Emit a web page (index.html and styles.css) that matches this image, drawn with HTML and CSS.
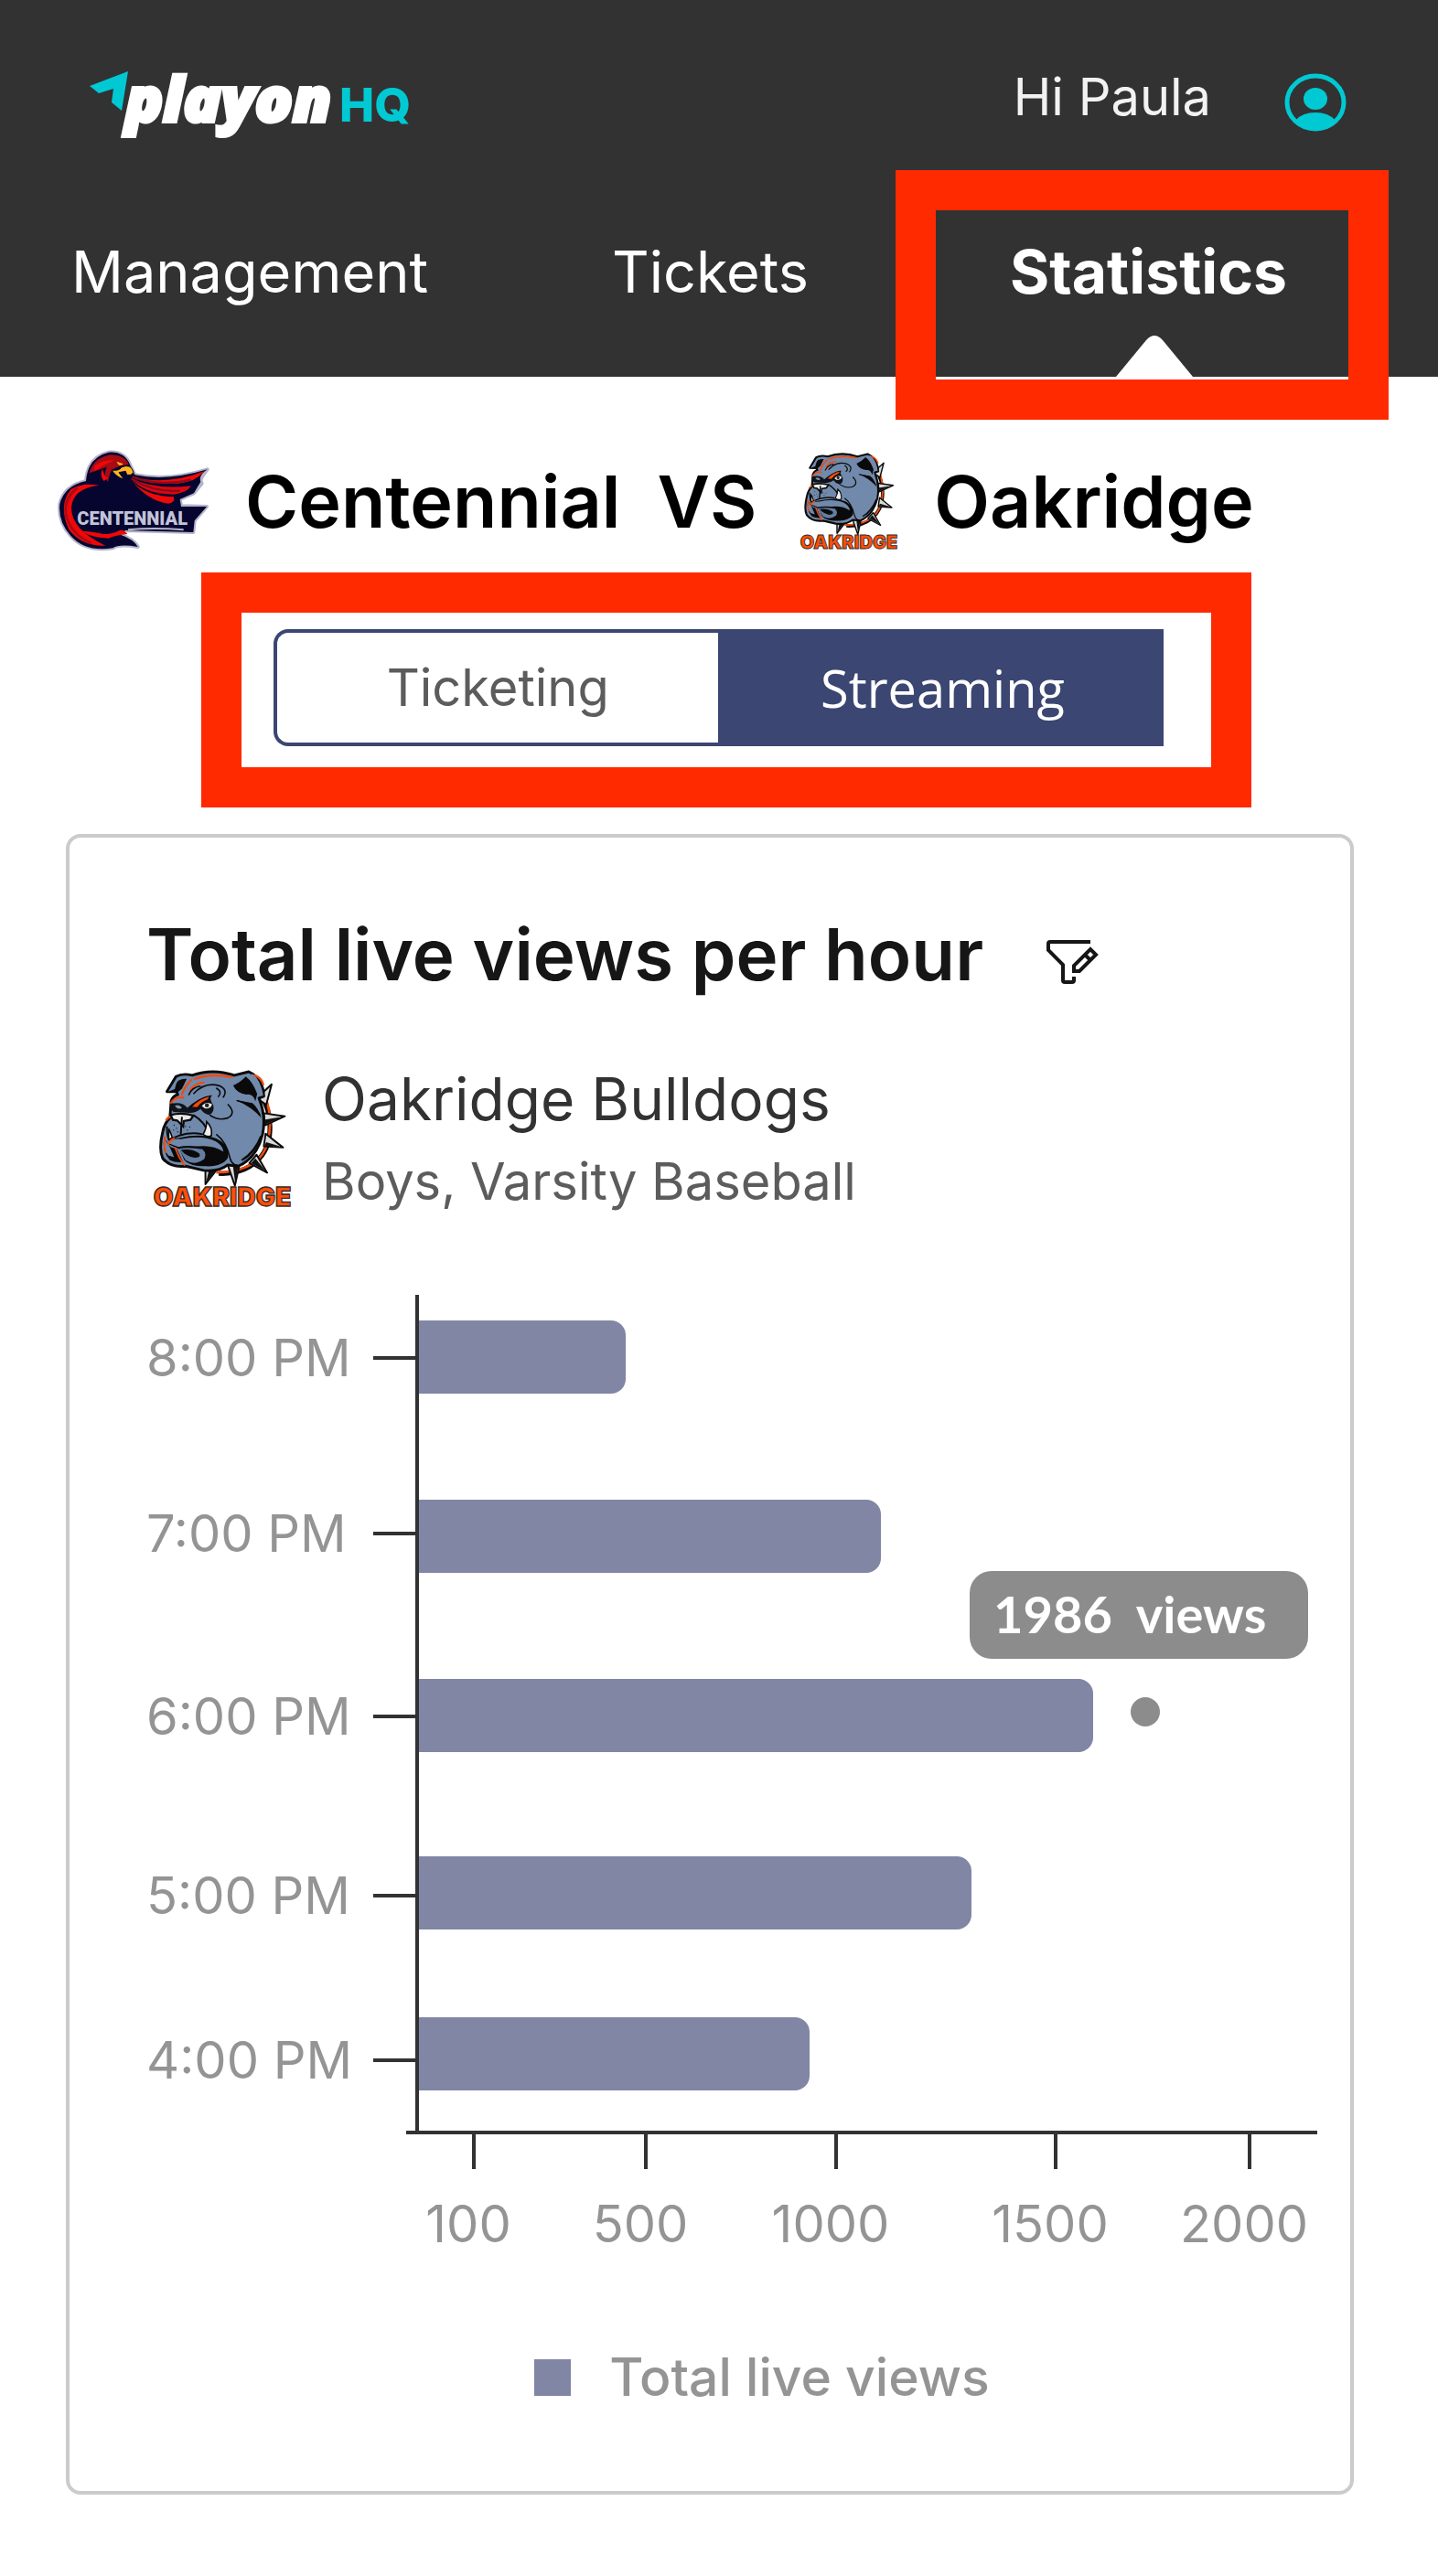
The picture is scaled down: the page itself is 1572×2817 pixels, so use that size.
FILE: index.html
```html
<!DOCTYPE html>
<html lang="en">
<head>
<meta charset="utf-8">
<meta name="viewport" content="width=device-width, initial-scale=1">
<title>PlayOn HQ – Statistics</title>
<link rel="stylesheet" href="styles.css">
</head>
<body>
<svg class="sprite" width="0" height="0" aria-hidden="true">
  <defs>
  <symbol id="bulldog" viewBox="54 58 456 452">
    <path d="M300 95 C400 90 445 170 440 260 C437 345 370 405 270 400" fill="none" stroke="#0a0a0a" stroke-width="16"/>
    <path d="M395 90 C440 150 450 230 432 300 C415 360 360 395 262 397" fill="none" stroke="#f24a0c" stroke-width="8"/>
    <g fill="#d9d9d9" stroke="#0a0a0a" stroke-width="6" stroke-linejoin="round">
      <path d="M396 150 L446 104 L428 172Z"/>
      <path d="M420 200 L490 210 L424 240Z"/>
      <path d="M426 268 L484 314 L420 310Z"/>
      <path d="M396 338 L431 398 L372 366Z"/>
      <path d="M300 372 L324 441 L340 368Z"/>
      <path d="M226 382 L226 436 L260 392Z"/>
    </g>
    <g fill="#111">
      <path d="M422 222 L482 212 L424 238Z"/><path d="M428 296 L478 311 L422 308Z"/><path d="M392 350 L426 392 L378 366Z"/><path d="M318 378 L325 434 L336 372Z"/><path d="M238 388 L228 430 L256 394Z"/>
    </g>
    <path d="M98 128 L128 78 Q150 66 182 74 Q250 50 322 74 L370 62 Q418 84 420 144 L404 150 Q428 210 416 270 Q396 350 335 376 L300 372 Q270 396 220 390 L160 376 Q110 382 84 350 Q70 320 84 262 Q90 232 108 216 L112 160 Q118 142 134 138 L130 128Z" fill="#718aac" stroke="#0a0a0a" stroke-width="9" stroke-linejoin="round"/>
    <path d="M98 130 Q120 126 126 104 L136 92 Q150 84 164 86 L148 118 L132 132Z" fill="#0a0a0a"/>
    <path d="M102 128 L134 84 L124 120Z" fill="#718aac"/>
    <path d="M318 108 Q344 96 360 78 Q384 96 398 136 L392 160 Q384 134 362 138 Q330 134 318 108Z" fill="#0a0a0a"/>
    <path d="M372 72 Q396 100 408 142 L418 142 Q410 92 384 70Z" fill="#718aac"/>
    <path d="M190 86 Q240 66 314 80 M390 74 Q412 82 418 104 M178 90 Q154 116 148 138 M176 124 Q188 100 220 98 M112 166 Q124 144 152 148 M96 222 Q104 210 112 212" fill="none" stroke="#f24a0c" stroke-width="7" stroke-linecap="round"/>
    <path d="M170 140 Q182 112 210 110 M186 136 Q222 96 270 108 Q304 122 284 148 M300 170 Q330 200 300 216 Q270 226 240 206 M262 116 Q284 130 268 146" fill="none" stroke="#0a0a0a" stroke-width="5"/>
    <path d="M110 168 Q150 160 166 182 Q200 150 244 142 Q240 158 252 172 Q258 196 238 206 Q218 200 210 186 Q190 202 164 198 L120 196 Q106 188 110 168Z" fill="#101319"/>
    <path d="M178 180 Q204 148 244 142 L234 156 Q212 164 200 182Z" fill="#f24a0c" stroke="#0a0a0a" stroke-width="4"/>
    <path d="M214 176 Q228 158 248 170 Q244 186 224 184Z" fill="#eee"/><circle cx="231" cy="174" r="7" fill="#222"/>
    <path d="M124 176 q14 -8 24 6 q-12 8 -24 -6Z" fill="#8796ab"/>
    <path d="M110 206 Q146 196 186 208 L176 222 L154 226 L152 244 L132 224 L118 222Z" fill="#e9e9e9" stroke="#0a0a0a" stroke-width="7"/>
    <path d="M148 212 L144 270 M186 206 Q226 230 236 268 M98 244 Q98 280 106 288 L140 274 Q180 262 216 270" fill="none" stroke="#0a0a0a" stroke-width="6"/>
    <path d="M104 252 Q112 268 116 282 L104 288Z M230 228 Q250 246 246 274 Q234 282 218 270 Q230 252 230 228Z" fill="#eee" stroke="#0a0a0a" stroke-width="5"/>
    <g fill="#0a0a0a"><circle cx="122" cy="240" r="2"/><circle cx="130" cy="250" r="2"/><circle cx="120" cy="256" r="2"/><circle cx="134" cy="262" r="2"/><circle cx="160" cy="244" r="2"/><circle cx="166" cy="256" r="2"/><circle cx="174" cy="246" r="2"/></g>
    <path d="M88 280 Q82 330 108 356 Q130 366 152 362 L132 320 L110 312Z" fill="#0a0a0a"/>
    <path d="M88 282 Q84 318 102 340 L122 346 L108 314Z" fill="#718aac"/>
    <path d="M104 304 Q110 284 140 282 Q210 266 262 284 Q310 306 300 350 Q278 380 226 376 Q176 378 156 356 L140 320Z" fill="#0a0a0a"/>
    <path d="M104 300 Q114 284 144 286 Q214 272 258 292 Q284 306 286 328 Q250 304 200 310 Q160 306 136 312Z" fill="#718aac"/>
    <path d="M138 318 Q170 312 216 320 Q232 334 222 352 Q192 376 160 356Z" fill="#657d9f"/>
    <path d="M144 322 Q180 316 206 334 Q212 348 190 348 Q162 344 144 322Z" fill="#0a0a0a"/>
    <path d="M102 306 Q106 290 122 284 M126 316 Q138 350 156 372 M92 280 Q86 310 94 330" fill="none" stroke="#f24a0c" stroke-width="6" stroke-linecap="round"/>
    <path d="M262 270 Q296 296 308 350 Q314 372 334 374 M330 158 L376 170 Q396 186 408 206 M346 356 Q390 328 410 276" fill="none" stroke="#0a0a0a" stroke-width="5"/>
    <path d="M326 156 L382 166 Q402 182 412 216 Q380 178 326 156Z M348 360 Q398 330 412 274 Q392 316 348 360Z" fill="#0a0a0a"/>
    <text class="crest-name" x="282" y="508" text-anchor="middle">OAKRIDGE</text>
  </symbol>
  </defs>
</svg>

<header class="header">
  <div class="topbar">
    <a class="brand" href="#" aria-label="PlayOn HQ">
      <svg width="352" height="84" viewBox="97 76 352 84">
        <path d="M98 94 L140 78 L133 121 L122 112 L124 97 L108 102Z" fill="#00c9d3"/>
        <text class="brand-name" x="137" y="133">playon</text>
        <text class="brand-hq" x="371" y="133">HQ</text>
      </svg>
    </a>
    <a class="user" href="#">
      <span>Hi Paula</span>
      <svg class="avatar" width="68" height="64" viewBox="0 0 68 64" aria-hidden="true">
        <ellipse cx="34" cy="32" rx="31" ry="29" fill="none" stroke="#00c9d3" stroke-width="5"/>
        <ellipse cx="34" cy="28" rx="13" ry="12" fill="#00c9d3"/>
        <path d="M13 51 Q20 43 34 43 Q48 43 55 51 Q46 62 34 62 Q22 62 13 51Z" fill="#00c9d3"/>
      </svg>
    </a>
  </div>
  <nav class="nav">
    <a class="nav-link" href="#">Management</a>
    <a class="nav-link" href="#">Tickets</a>
    <a class="nav-link nav-link-active" href="#" aria-current="page">Statistics
      <svg class="pointer" width="84" height="46" viewBox="0 0 84 46" aria-hidden="true"><path d="M0 46 L33 6 Q42 -4 51 6 L84 46Z" fill="#fff"/></svg>
      <span class="callout callout-nav"></span>
    </a>
  </nav>
</header>

<main>
  <h1 class="matchup">
    <svg class="crest-eagle" width="164" height="112" viewBox="42 36 492 336" role="img" aria-label="Centennial crest">
      <g stroke="#b4b4cb" stroke-width="12" stroke-linejoin="round" fill="#05052f">
        <path d="M132 138 Q138 60 206 44 Q258 40 276 84 L292 118 Q400 140 530 100 Q508 128 508 138 L512 146 L486 178 L440 198 L444 220 L528 222 L488 268 L484 306 L262 300 L240 312 Q290 330 302 354 Q240 344 220 358 Q130 372 82 318 Q40 270 46 214 Q60 154 132 138Z"/>
      </g>
      <path d="M132 138 Q138 60 206 44 Q258 40 276 84 L292 118 Q400 140 530 100 Q500 120 508 140 L486 178 L440 198 L444 222 L528 222 L488 268 L484 306 L262 300 L240 312 Q290 330 302 354 Q240 344 220 358 Q130 372 82 318 Q40 270 46 214 Q60 154 132 138Z" fill="#05052f"/>
      <path d="M142 112 Q156 62 212 52 Q260 52 272 84 Q246 86 226 96 Q210 100 204 142 Q188 120 200 92 Q160 106 142 112Z" fill="#a80b13"/>
      <path d="M160 88 Q190 66 226 70 L194 84 L160 106Z M190 138 Q176 120 186 98 Q190 118 204 130Z" fill="#ef0808"/>
      <path d="M280 122 Q390 156 520 106 Q490 142 436 146 Q350 150 280 122Z" fill="#ef0808"/>
      <path d="M278 128 Q360 168 476 154 Q466 176 420 182 Q320 180 278 128Z" fill="#d90810"/>
      <path d="M282 138 Q330 188 420 190 Q426 210 402 212 Q340 206 282 138Z" fill="#ef0808"/>
      <path d="M284 124 Q370 158 476 134 M288 136 Q360 176 440 170" fill="none" stroke="#8c0a18" stroke-width="7"/>
      <path d="M176 152 Q88 162 84 226 Q84 298 196 350 Q120 354 76 298 Q40 220 82 166 Q118 142 176 152Z" fill="#ef0808"/>
      <path d="M104 160 Q60 194 66 246 Q80 312 150 342" fill="none" stroke="#a80b13" stroke-width="8"/>
      <path d="M120 302 Q160 304 190 312 Q216 314 242 300 Q256 296 268 312 Q230 316 206 326 Q142 322 120 302Z" fill="#ef0808"/>
      <path d="M216 102 Q240 106 250 92 Q280 80 288 110 Q280 122 266 118 L262 106 L240 110 L256 132 Q232 126 216 102Z" fill="#ffb71b" stroke="#05052f" stroke-width="3"/>
      <path d="M232 74 L254 82 Q246 90 238 84Z" fill="#ffb71b"/>
      <path d="M270 298 Q350 290 452 298" fill="none" stroke="#b4b4cb" stroke-width="6"/>
      <text class="crest-city" x="284" y="281" text-anchor="middle">CENTENNIAL</text>
    </svg>
    <span>Centennial</span>
    <span>VS</span>
    <svg class="crest-dog" width="106" height="106" role="img" aria-label="Oakridge crest"><use href="#bulldog"/></svg>
    <span>Oakridge</span>
  </h1>

  <div class="switch-area">
    <div class="switch" role="group" aria-label="Statistics type">
      <button class="switch-option" type="button" aria-pressed="false">Ticketing</button>
      <button class="switch-option switch-option-on" type="button" aria-pressed="true">Streaming</button>
    </div>
  </div>

  <section class="card">
    <div class="card-head">
      <h2>Total live views per hour</h2>
      <button class="filter" type="button" aria-label="Edit filter">
        <svg width="56" height="48" viewBox="0 0 56 48" fill="none" stroke="#161616" stroke-width="4">
          <path d="M48 2 H4 Q2 2 2 4 V11 L18 27 V44 Q18 46 20 46 H28 Q30 46 30 44 V40"/>
          <path d="M30 34 V28 L48 10 L54 16 L36 34Z M42 16 L48 22"/>
        </svg>
      </button>
    </div>
    <div class="team">
      <svg width="150" height="150" role="img" aria-label="Oakridge crest"><use href="#bulldog"/></svg>
      <div>
        <p class="team-name">Oakridge Bulldogs</p>
        <p class="team-level">Boys, Varsity Baseball</p>
      </div>
    </div>
    <figure class="chart">
      <div class="hours">
        <span class="hour">8:00 PM</span>
        <span class="hour">7:00 PM</span>
        <span class="hour">6:00 PM</span>
        <span class="hour">5:00 PM</span>
        <span class="hour">4:00 PM</span>
      </div>
      <div class="plot">
        <div class="track"><div class="bar" style="width:23%"></div></div>
        <div class="track"><div class="bar" style="width:51.4%"></div></div>
        <div class="track"><div class="bar" style="width:75%"></div><span class="tooltip">1986&nbsp; views</span><span class="dot"></span></div>
        <div class="track"><div class="bar" style="width:61.5%"></div></div>
        <div class="track"><div class="bar" style="width:43.5%"></div></div>
      </div>
      <div class="scale">
        <span class="mark">100</span>
        <span class="mark">500</span>
        <span class="mark">1000</span>
        <span class="mark">1500</span>
        <span class="mark">2000</span>
      </div>
      <figcaption class="legend">Total live views</figcaption>
    </figure>
  </section>
</main>
</body>
</html>
```
FILE: styles.css
```css
* { box-sizing: border-box; }
body {
  margin: 0;
  background: #fff;
  color: #000;
  font-family: Inter, "Liberation Sans", sans-serif;
}
h1, h2, p, figure { margin: 0; }
a { color: inherit; text-decoration: none; }
button { font: inherit; border: 0; background: none; padding: 0; cursor: pointer; }
svg { display: block; flex: none; overflow: visible; }
.sprite { position: absolute; }
symbol { overflow: visible; }
.crest-name {
  font: 900 86px Inter, sans-serif;
  fill: #ff4f08;
  stroke: #3a2a26;
  stroke-width: 4px;
}
.crest-city { font: 900 60px Roboto, sans-serif; fill: #c3c3da; }

.header { background: #323232; color: #fff; padding-top: 70px; }
.topbar {
  display: flex;
  justify-content: space-between;
  align-items: flex-start;
  padding: 0 100px 0 97px;
}
.brand { padding-top: 6px; }
.brand-name {
  font: italic 800 68px "Open Sans", sans-serif;
  fill: #fff;
  stroke: #fff;
  stroke-width: 4px;
}
.brand-hq { font: 800 51px Inter, sans-serif; fill: #00c9d3; }
.user { display: flex; gap: 80px; color: #f2f2f2; font-size: 56px; line-height: 72px; }
.avatar { margin-top: 10px; }
.nav {
  display: flex;
  gap: 201px;
  padding: 101px 165px 0 78px;
  font-size: 63px;
  line-height: 72px;
}
.nav-link { padding-bottom: 79px; }
.nav-link-active { position: relative; margin-left: auto; font-size: 66px; font-weight: 700; }
.pointer { position: absolute; left: 50%; bottom: 0; margin-left: -36px; }
.callout { position: absolute; border: 44px solid #ff2a00; }
.callout-nav { inset: -75px -111px -47px -125px; z-index: 1; }

.matchup {
  display: flex;
  align-items: center;
  gap: 40px;
  padding: 80px 40px 22px 64px;
  font-size: 79px;
  line-height: 110px;
  font-weight: 600;
}
.crest-dog { margin-left: 8px; }

.switch-area {
  width: 73%;
  margin: 0 auto 0 14%;
  padding: 18px 52px 23px 35px;
  border: 44px solid #ff2a00;
}
.switch { display: flex; height: 128px; }
.switch-option {
  flex: 1;
  border: 4px solid #3c4672;
  border-right: 0;
  border-radius: 16px 0 0 16px;
  color: #5c5c5c;
  font-size: 56px;
}
.switch-option-on {
  border-radius: 0;
  background: #3c4672;
  color: #fff;
  font-family: "Open Sans", sans-serif;
}

.card {
  margin: 29px 92px 89px 72px;
  padding: 84px 36px 92px 84px;
  border: 4px solid #cbcbcb;
  border-radius: 16px;
}
.card-head { display: flex; align-items: center; gap: 69px; }
h2 { color: #161616; font-size: 78px; line-height: 88px; font-weight: 600; }
.filter { padding-top: 16px; }
.team { display: flex; gap: 34px; padding: 82px 0 0 8px; }
.team-name { color: #323232; font-size: 64px; line-height: 64px; }
.team-level { padding-top: 26px; color: #5c5c5c; font-size: 56px; line-height: 64px; }

.chart {
  display: grid;
  grid-template-columns: 294px 1fr;
  padding-top: 92px;
  color: #949494;
  font-size: 56px;
  line-height: 64px;
}
.hours { display: grid; grid-template-rows: 109px 192px 200px 196px 217px; }
.hour {
  display: flex;
  align-items: center;
  justify-content: space-between;
  height: 80px;
  margin-top: auto;
  white-space: nowrap;
}
.hour:last-child { margin: 100px 0 0; }
.hour::after { content: ""; width: 46px; height: 4px; background: #323232; }
.plot {
  display: grid;
  grid-template-rows: 108px 196px 196px 194px 176px;
  align-items: end;
  border-left: 4px solid #323232;
}
.track { position: relative; height: 80px; }
.bar { height: 80px; border-radius: 0 16px 16px 0; background: #8086a4; }
.tooltip {
  position: absolute;
  left: 61.3%;
  bottom: 102px;
  padding: 15px 46px 17px 26px;
  border-radius: 24px;
  background: #8c8c8c;
  color: #fff;
  font: 700 56px/64px Lato, sans-serif;
  white-space: nowrap;
}
.dot {
  position: absolute;
  left: 79.2%;
  top: 20px;
  width: 32px;
  height: 32px;
  border-radius: 50%;
  background: #8c8c8c;
}
.scale {
  grid-column: 2;
  display: grid;
  grid-template-columns: 136fr 240fr 176fr 304fr 120fr 20fr;
  margin-left: -10px;
  border-top: 4px solid #323232;
}
.mark {
  display: flex;
  flex-direction: column;
  align-items: center;
  gap: 28px;
  min-width: 0;
}
.mark::before { content: ""; width: 4px; height: 38px; margin-left: 12px; background: #323232; }
.legend {
  grid-column: 1 / -1;
  display: flex;
  align-items: center;
  justify-content: center;
  gap: 42px;
  padding: 104px 0 0 66px;
  font-size: 57px;
  font-weight: 500;
}
.legend::before { content: ""; width: 40px; height: 40px; background: #8086a4; }
```
